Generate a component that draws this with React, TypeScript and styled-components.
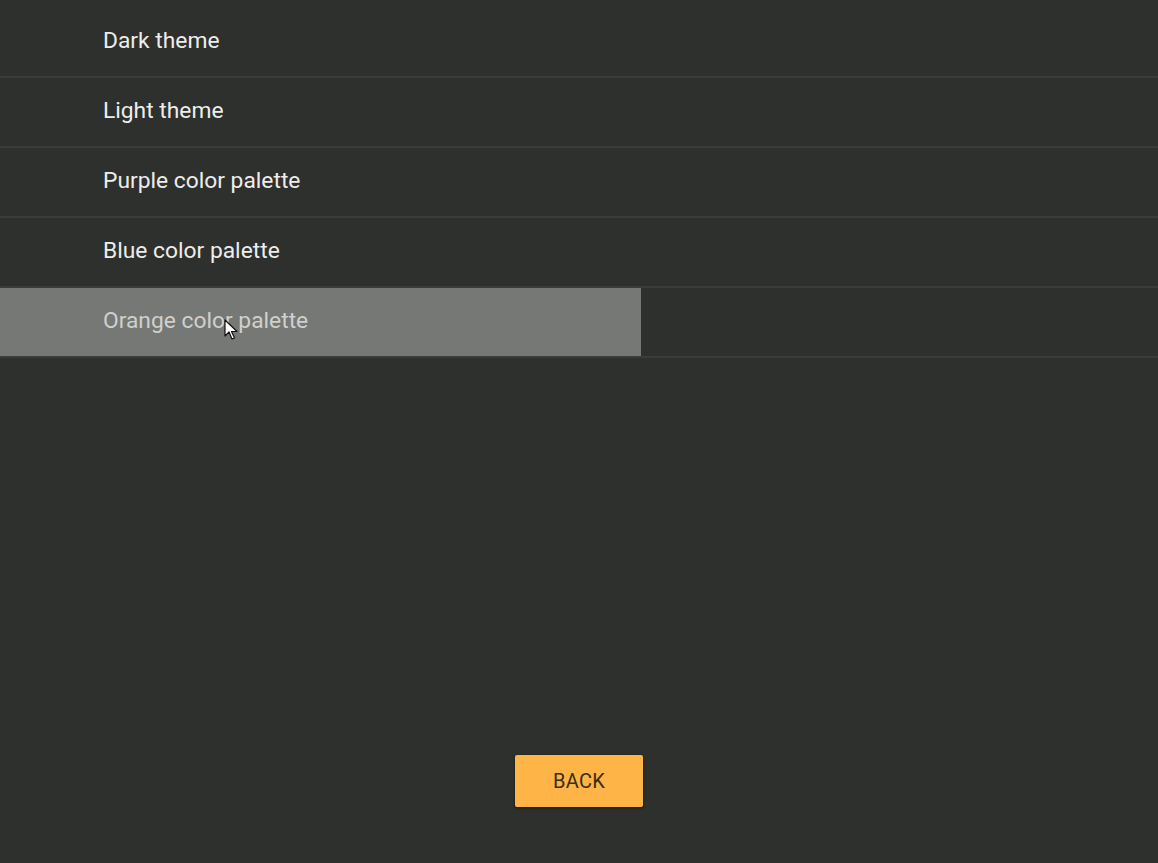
import React from "react";
import styled, { createGlobalStyle } from "styled-components";

const Global = createGlobalStyle`
  html, body { margin: 0; padding: 0; background: #2e302d; }
  body { font-family: Roboto, "Noto Sans", sans-serif; }
`;

const Screen = styled.div`
  width: 1158px;
  height: 863px;
  background: #2e302d;
  display: flex;
  flex-direction: column;
  padding-top: 8px;
  box-sizing: border-box;
  position: relative;
  overflow: hidden;
`;

const List = styled.ul`
  list-style: none;
  margin: 0;
  padding: 0;
  display: flex;
  flex-direction: column;
`;

const Row = styled.li`
  height: 68px;
  border-bottom: 2px solid #3a3c39;
  display: flex;
`;

const Item = styled.div<{ $active?: boolean }>`
  width: 641px;
  height: 100%;
  box-sizing: border-box;
  padding-left: 103px;
  padding-bottom: 4px;
  display: flex;
  align-items: center;
  font-size: 22.8px;
  color: ${(p) => (p.$active ? "#cfd0ce" : "#ededeb")};
  background: ${(p) => (p.$active ? "#767875" : "transparent")};
  position: relative;
`;

const Footer = styled.div`
  flex: 1;
  display: flex;
  justify-content: center;
  align-items: flex-end;
  padding-bottom: 56px;
`;

const BackButton = styled.button`
  width: 128px;
  height: 52px;
  border: none;
  border-radius: 2px;
  background: #ffb447;
  color: #3b2c12;
  font-family: Roboto, "Noto Sans", sans-serif;
  font-size: 20px;
  letter-spacing: 0.3px;
  box-shadow: 0 1px 3px rgba(0, 0, 0, 0.5);
  cursor: pointer;
`;

const Cursor = styled.svg`
  position: absolute;
  left: 224px;
  top: 31px;
`;

const items = [
  "Dark theme",
  "Light theme",
  "Purple color palette",
  "Blue color palette",
  "Orange color palette",
];

export default function App() {
  return (
    <>
      <Global />
      <Screen>
        <List>
          {items.map((t, i) => (
            <Row key={t}>
              <Item $active={i === 4}>
                {t}
                {i === 4 && (
                  <Cursor width="14" height="22" viewBox="0 0 14 22">
                    <path
                      d="M1 1 L1 17 L5 13 L8 20 L10.5 19 L7.5 12.5 L13 12.5 Z"
                      fill="#ffffff"
                      stroke="#111"
                      strokeWidth="1.2"
                      strokeLinejoin="round"
                    />
                  </Cursor>
                )}
              </Item>
            </Row>
          ))}
        </List>
        <Footer>
          <BackButton>BACK</BackButton>
        </Footer>
      </Screen>
    </>
  );
}
